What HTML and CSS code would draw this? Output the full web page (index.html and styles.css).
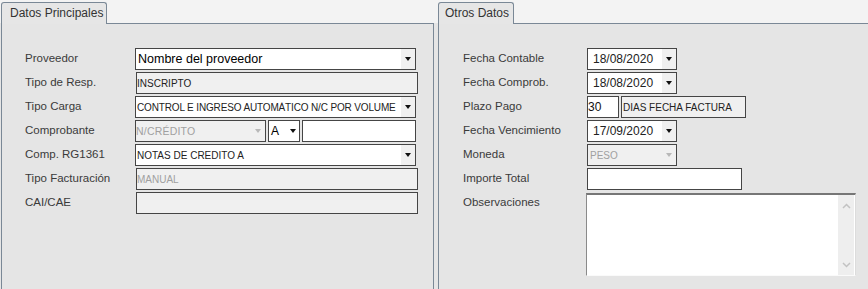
FILE: index.html
```html
<!DOCTYPE html>
<html lang="es">
<head>
<meta charset="utf-8">
<title>Comprobante</title>
<link rel="stylesheet" href="styles.css">
</head>
<body>
<div class="tabset">
  <section class="panel panel-left">
    <div class="tabbar"><div class="tab tab-main">Datos Principales</div></div>
    <div class="pbody pbody-left">
      <div class="row">
        <span class="lbl">Proveedor</span>
        <div class="box w281"><span class="val big">Nombre del proveedor</span><span class="btn"><i class="arrow"></i></span></div>
      </div>
      <div class="row">
        <span class="lbl">Tipo de Resp.</span>
        <div class="box dis w282 shift"><span class="val caps p0">INSCRIPTO</span></div>
      </div>
      <div class="row">
        <span class="lbl">Tipo Carga</span>
        <div class="box w281"><span class="val caps tight">CONTROL E INGRESO AUTOMÁTICO N/C POR VOLUME</span><span class="btn"><i class="arrow"></i></span></div>
      </div>
      <div class="row">
        <span class="lbl">Comprobante</span>
        <div class="box dis w131"><span class="val caps grey wide p0">N/CRÉDITO</span><span class="btn plain"><i class="arrow grey-arrow"></i></span></div>
        <div class="box w32 gap"><span class="val small-a">A</span><span class="btn plain narrow"><i class="arrow"></i></span></div>
        <div class="box w114 gap"></div>
      </div>
      <div class="row">
        <span class="lbl">Comp. RG1361</span>
        <div class="box w281"><span class="val caps">NOTAS DE CREDITO A</span><span class="btn"><i class="arrow"></i></span></div>
      </div>
      <div class="row">
        <span class="lbl">Tipo Facturación</span>
        <div class="box dis w282 shift"><span class="val caps grey p0">MANUAL</span></div>
      </div>
      <div class="row">
        <span class="lbl">CAI/CAE</span>
        <div class="box dis w282 shift"></div>
      </div>
    </div>
  </section>

  <section class="panel panel-right">
    <div class="tabbar"><div class="tab tab-other">Otros Datos</div></div>
    <div class="pbody pbody-right">
      <div class="row">
        <span class="lbl lbl-r">Fecha Contable</span>
        <div class="box w90"><span class="val date">18/08/2020</span><span class="btn"><i class="arrow"></i></span></div>
      </div>
      <div class="row">
        <span class="lbl lbl-r">Fecha Comprob.</span>
        <div class="box w90"><span class="val date">18/08/2020</span><span class="btn"><i class="arrow"></i></span></div>
      </div>
      <div class="row">
        <span class="lbl lbl-r">Plazo Pago</span>
        <div class="box w32"><span class="val num">30</span></div>
        <div class="box dis w125 gap"><span class="val caps">DIAS FECHA FACTURA</span></div>
      </div>
      <div class="row">
        <span class="lbl lbl-r">Fecha Vencimiento</span>
        <div class="box w90"><span class="val date">17/09/2020</span><span class="btn"><i class="arrow"></i></span></div>
      </div>
      <div class="row">
        <span class="lbl lbl-r">Moneda</span>
        <div class="box dis w90"><span class="val caps grey p2">PESO</span><span class="btn plain"><i class="arrow grey-arrow"></i></span></div>
      </div>
      <div class="row">
        <span class="lbl lbl-r">Importe Total</span>
        <div class="box w155"></div>
      </div>
      <div class="row row-tall">
        <span class="lbl lbl-r">Observaciones</span>
        <div class="memo">
          <div class="memo-text"></div>
          <div class="scroll">
            <svg width="9" height="6" viewBox="0 0 9 6"><polyline points="1,5 4.5,1.5 8,5" fill="none" stroke="#c2c2c2" stroke-width="1.5"/></svg>
            <svg width="9" height="6" viewBox="0 0 9 6"><polyline points="1,1 4.5,4.5 8,1" fill="none" stroke="#c2c2c2" stroke-width="1.5"/></svg>
          </div>
        </div>
      </div>
    </div>
  </section>
</div>
</body>
</html>
```
FILE: styles.css
```css
html, body {
  margin: 0;
  padding: 0;
}
body {
  width: 868px;
  height: 289px;
  overflow: hidden;
  background: linear-gradient(#f3f3f3 0, #f3f3f3 23px, #e5e5e5 23px);
  font-family: "Liberation Sans", Arial, sans-serif;
  color: #333;
}
.tabset {
  display: flex;
  gap: 4px;
  height: 289px;
  padding-left: 1px;
}
.panel {
  display: flex;
  flex-direction: column;
}
.panel-left {
  width: 433px;
  flex: none;
}
.panel-right {
  flex: 1;
}
.tabbar {
  height: 23px;
  display: flex;
  align-items: flex-end;
  position: relative;
  z-index: 1;
}
.tab {
  box-sizing: border-box;
  height: 22px;
  margin-bottom: -1px;
  border: 1px solid #7a8896;
  border-bottom: none;
  border-radius: 3px 3px 0 0;
  background: #e6e6e6;
  font-size: 12px;
  line-height: 20px;
  color: #333;
  white-space: nowrap;
}
.tab-main {
  width: 106px;
  padding-left: 8px;
}
.tab-other {
  width: 76px;
  padding-left: 6px;
}
.pbody {
  flex: 1;
  background: #e5e5e5;
  border: 1px solid #7a8896;
  border-bottom: none;
  padding-top: 24px;
}
.pbody-left {
  padding-left: 23px;
}
.pbody-right {
  padding-left: 24px;
  border-right: none;
}
.row {
  display: flex;
  height: 22px;
  margin-bottom: 2px;
}
.row-tall {
  height: auto;
}
.lbl {
  flex: none;
  width: 110px;
  font-size: 11.5px;
  line-height: 20px;
  color: #3a3a3a;
  white-space: nowrap;
}
.lbl-r {
  width: 124px;
}
.box {
  box-sizing: border-box;
  height: 22px;
  border: 1px solid #454545;
  background: #fff;
  display: flex;
  align-items: center;
  overflow: hidden;
  flex: none;
}
.box.dis {
  background: #f0f0f0;
}
.shift {
  margin-left: 1px;
}
.gap {
  margin-left: 2px;
}
.w281 { width: 281px; }
.w282 { width: 282px; }
.w131 { width: 131px; }
.w32 { width: 32px; }
.w114 { width: 114px; }
.w90 { width: 90px; }
.w125 { width: 125px; margin-left: 2px; }
.w155 { width: 155px; }
.val {
  flex: 1;
  min-width: 0;
  white-space: nowrap;
  overflow: hidden;
  padding-left: 2px;
  color: #111;
}
.big {
  font-size: 12.5px;
  color: #000;
}
.caps {
  font-size: 10px;
  color: #222;
  padding-left: 1px;
}
.tight {
  letter-spacing: -0.15px;
}
.wide {
  font-size: 10.5px;
  letter-spacing: 0.2px;
}
.p0 {
  padding-left: 0;
}
.p2 {
  padding-left: 2px;
}
.grey {
  color: #a0a0a0;
}
.small-a {
  font-size: 12px;
  padding-left: 2px;
  color: #000;
}
.date {
  font-size: 12px;
  padding-left: 5px;
  color: #222;
}
.num {
  font-size: 12px;
  padding-left: 0;
  color: #111;
}
.btn {
  flex: none;
  width: 14px;
  align-self: stretch;
  background: #f0f0f0;
  display: flex;
  align-items: center;
  justify-content: center;
}
.btn.plain {
  background: transparent;
}
.btn.narrow {
  width: 13px;
}
.arrow {
  display: block;
  width: 0;
  height: 0;
  border-left: 3px solid transparent;
  border-right: 3px solid transparent;
  border-top: 4px solid #111;
}
.grey-arrow {
  border-top-color: #b8b8b8;
}
.memo {
  box-sizing: border-box;
  width: 270px;
  height: 83px;
  margin-left: -1px;
  margin-top: 1px;
  border-top: 2px solid #767676;
  border-left: 1px solid #8a8a8a;
  border-right: 1px solid #dcdcdc;
  border-bottom: 1px solid #fafafa;
  background: #fff;
  display: flex;
}
.memo-text {
  flex: 1;
}
.scroll {
  width: 16px;
  margin-right: 1px;
  background: #eeeeee;
  display: flex;
  flex-direction: column;
  justify-content: space-between;
  align-items: center;
  padding: 8px 0 7px;
}
```
